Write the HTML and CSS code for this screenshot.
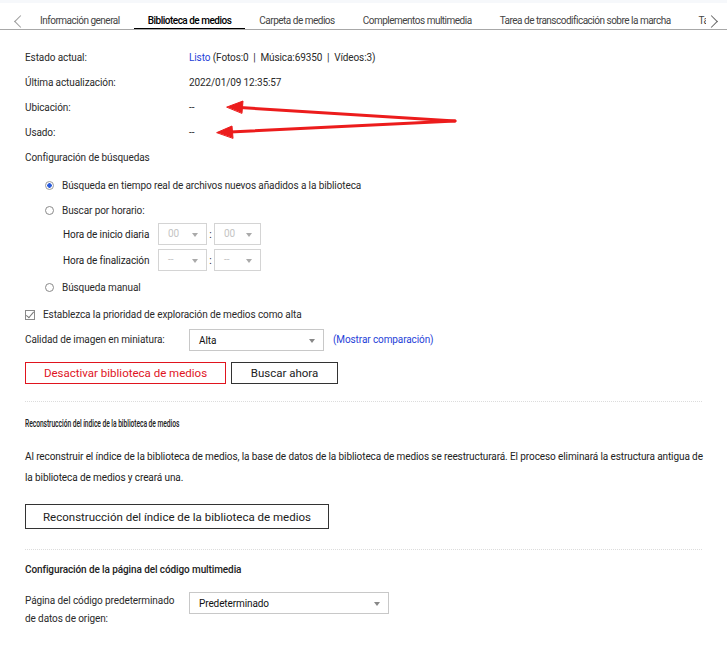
FILE: index.html
```html
<!DOCTYPE html>
<html lang="es">
<head>
  <meta charset="UTF-8" />
  <title>Biblioteca de medios</title>
  <link rel="stylesheet" href="styles.css">
</head>
<body>

<div class="tabbar">
  <span class="chev chev-left"></span>
  <div class="tabs">
    <div class="tab">Información general</div>
    <div class="tab active">Biblioteca de medios</div>
    <div class="tab">Carpeta de medios</div>
    <div class="tab">Complementos multimedia</div>
    <div class="tab">Tarea de transcodificación sobre la marcha</div>
    <div class="tab">Tarea</div>
  </div>
  <span class="chev chev-right"></span>
</div>

<main class="content">
  <div class="row"><span class="label">Estado actual:</span><span><span class="link">Listo</span> (Fotos:0 &nbsp;|&nbsp; Música:69350 &nbsp;|&nbsp; Vídeos:3)</span></div>
  <div class="row"><span class="label">Última actualización:</span><span>2022/01/09 12:35:57</span></div>
  <div class="row"><span class="label">Ubicación:</span><span>--</span></div>
  <div class="row"><span class="label">Usado:</span><span>--</span></div>
  <div class="row">Configuración de búsquedas</div>

  <div class="options">
    <div class="row"><span class="radio on"></span>Búsqueda en tiempo real de archivos nuevos añadidos a la biblioteca</div>
    <div class="row"><span class="radio"></span>Buscar por horario:</div>
    <div class="time-row">
      <span class="time-label">Hora de inicio diaria</span>
      <span class="tsel">00</span><span class="colon">:</span><span class="tsel">00</span>
    </div>
    <div class="time-row">
      <span class="time-label">Hora de finalización</span>
      <span class="tsel">--</span><span class="colon">:</span><span class="tsel">--</span>
    </div>
    <div class="row"><span class="radio"></span>Búsqueda manual</div>
  </div>

  <div class="row"><span class="check"></span>Establezca la prioridad de exploración de medios como alta</div>
  <div class="row">
    <span class="label">Calidad de imagen en miniatura:</span>
    <span class="select sel-quality">Alta</span>
    <span class="link compare">(Mostrar comparación)</span>
  </div>
  <div class="buttons">
    <button class="btn btn-red">Desactivar biblioteca de medios</button>
    <button class="btn btn-scan">Buscar ahora</button>
  </div>

  <hr class="sep">

  <section class="rebuild">
    <h2>Reconstrucción del índice de la biblioteca de medios</h2>
    <p>Al reconstruir el índice de la biblioteca de medios, la base de datos de la biblioteca de medios se reestructurará. El proceso eliminará la estructura antigua de la biblioteca de medios y creará una.</p>
    <button class="btn btn-rebuild">Reconstrucción del índice de la biblioteca de medios</button>
  </section>

  <hr class="sep sep-low">

  <section class="codepage">
    <h2>Configuración de la página del código multimedia</h2>
    <div class="cp-row">
      <span class="cp-label">Página del código predeterminado de datos de origen:</span>
      <span class="select sel-code">Predeterminado</span>
    </div>
  </section>
</main>

<svg class="arrows" width="727" height="647" viewBox="0 0 727 647">
  <g stroke="#ec1c1c" stroke-width="3" fill="#ec1c1c" stroke-linecap="round">
    <line x1="455" y1="121" x2="240" y2="107.5" />
    <line x1="455" y1="121" x2="230" y2="132" />
    <polygon points="227,107 243,101 242,113" stroke-width="1" />
    <polygon points="217,132.5 232,126 233,138" stroke-width="1" />
  </g>
</svg>

</body>
</html>
```

FILE: styles.css
```css
body {
  margin: 0;
  font-family: Roboto, "Noto Sans", sans-serif;
  font-size: 10px;
  letter-spacing: -0.1px;
  color: #2a2a2a;
  background: #fff;
  position: relative;
  width: 727px;
  height: 647px;
  overflow: hidden;
}

.tabbar {
  display: flex;
  align-items: stretch;
  height: 29px;
  border-bottom: 1px solid #a8a8a8;
  background: linear-gradient(#f6f8fb 0, #f6f8fb 3px, #fff 3px);
  position: relative;
}

.tabs {
  display: flex;
  margin-left: 26px;
  width: 680px;
  overflow: hidden;
  white-space: nowrap;
}

.tab {
  padding: 15px 14px 0;
  color: #444;
  letter-spacing: -0.5px;
  flex-shrink: 0;
}

.tab.active {
  color: #000;
  font-weight: 500;
  border-bottom: 2px solid #000;
  margin-bottom: -1px;
}

.chev {
  position: absolute;
  top: 17px;
  width: 8px;
  height: 8px;
  border-left: 1px solid #999;
  border-bottom: 1px solid #999;
}

.chev-left {
  left: 16px;
  transform: rotate(45deg);
}

.chev-right {
  right: 11px;
  transform: rotate(-135deg);
  border-color: #666;
}

.content {
  padding: 15px 25px 0;
}

.row {
  display: flex;
  align-items: center;
  height: 25px;
  white-space: nowrap;
}

.label {
  width: 164px;
  flex-shrink: 0;
}

.link {
  color: #1f3fd8;
}

.options {
  padding-left: 20px;
  margin: 3px 0 2px;
}

.radio {
  width: 9px;
  height: 9px;
  border: 1px solid #8a8a8a;
  border-radius: 50%;
  margin-right: 8px;
  box-sizing: border-box;
  flex-shrink: 0;
}

.radio.on {
  border-color: #9a9a9a;
  background: radial-gradient(circle, #2a5cdb 0, #2a5cdb 2px, #fff 2.5px);
}

.time-row {
  display: flex;
  align-items: center;
  height: 22px;
  padding-left: 18px;
  margin-bottom: 4px;
}

.time-label {
  width: 95px;
  color: #222;
  white-space: nowrap;
}

.tsel {
  width: 49px;
  height: 22px;
  border: 1px solid #d4d4d4;
  box-sizing: border-box;
  color: #c4c4c4;
  padding-left: 9px;
  line-height: 20px;
  position: relative;
}

.tsel::after,
.select::after {
  content: "";
  position: absolute;
  right: 8px;
  top: 9px;
  border-left: 3.5px solid transparent;
  border-right: 3.5px solid transparent;
  border-top: 4px solid #aaa;
}

.select::after {
  border-top-color: #888;
}

.colon {
  width: 7px;
  text-align: center;
}

.tsel + .colon + .tsel {
  width: 47px;
}

.check {
  width: 10px;
  height: 10px;
  border: 1px solid #8a8a8a;
  box-sizing: border-box;
  margin-right: 8px;
  position: relative;
}

.check::after {
  content: "";
  position: absolute;
  left: 2px;
  top: -1px;
  width: 3px;
  height: 7px;
  border-right: 1px solid #777;
  border-bottom: 1px solid #777;
  transform: rotate(40deg);
}

.select {
  display: inline-block;
  position: relative;
  height: 22px;
  line-height: 21px;
  border: 1px solid #c8c8c8;
  box-sizing: border-box;
  padding-left: 9px;
  color: #111;
}

.sel-quality {
  width: 135px;
  margin-top: 1px;
}

.compare {
  margin-left: 9px;
}

.buttons {
  display: flex;
  gap: 5px;
  margin-top: 10px;
}

.btn {
  font-family: inherit;
  font-size: 11.5px;
  letter-spacing: 0;
  height: 22px;
  background: #fff;
  padding: 0;
  cursor: pointer;
}

.btn-red {
  width: 201px;
  border: 1px solid #e0141e;
  color: #e0141e;
}

.btn-scan {
  width: 107px;
  border: 1px solid #333;
  color: #222;
}

.sep {
  border: none;
  border-top: 1px dotted #dcdcdc;
  margin: 17px 0 0;
}

.sep-low {
  margin-top: 20px;
}

.rebuild h2,
.codepage h2 {
  font-size: 10px;
  font-weight: 500;
  color: #222;
  margin: 15px 0 0;
  line-height: 14px;
}

.rebuild h2 {
  display: inline-block;
  font-size: 11px;
  transform: scaleX(0.61);
  transform-origin: left center;
  white-space: nowrap;
}

.rebuild p {
  margin: 15px 0 0;
  line-height: 21px;
  color: #222;
  width: 680px;
}

.btn-rebuild {
  display: block;
  margin-top: 16px;
  width: 304px;
  height: 25px;
  border: 1px solid #333;
  color: #222;
}

.codepage h2 {
  margin-top: 13px;
}

.cp-row {
  display: flex;
  align-items: flex-start;
  margin-top: 15px;
}

.cp-label {
  width: 160px;
  margin-right: 4px;
  line-height: 18px;
}

.sel-code {
  width: 200px;
}

.arrows {
  position: absolute;
  left: 0;
  top: 0;
  pointer-events: none;
}
```
